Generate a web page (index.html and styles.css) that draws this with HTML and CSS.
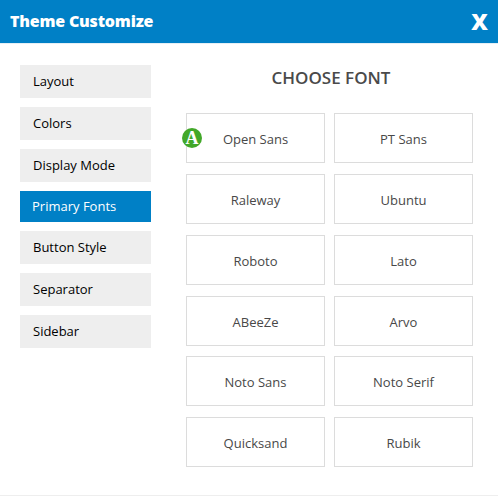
FILE: index.html
```html
<!DOCTYPE html>
<html lang="en">
<head>
<meta charset="utf-8">
<title>Theme Customize</title>
<link rel="stylesheet" href="styles.css">
</head>
<body>
<div class="dialog">
  <header class="header">
    <h1 class="title">Theme Customize</h1>
    <span class="close">X</span>
  </header>
  <main class="content">
    <nav class="menu">
      <a class="item">Layout</a>
      <a class="item">Colors</a>
      <a class="item">Display Mode</a>
      <a class="item active">Primary Fonts</a>
      <a class="item">Button Style</a>
      <a class="item">Separator</a>
      <a class="item">Sidebar</a>
    </nav>
    <section class="panel">
      <h2 class="heading">CHOOSE FONT</h2>
      <div class="fonts">
        <div class="font">Open Sans<span class="badge">A</span></div>
        <div class="font">PT Sans</div>
        <div class="font">Raleway</div>
        <div class="font">Ubuntu</div>
        <div class="font">Roboto</div>
        <div class="font">Lato</div>
        <div class="font">ABeeZe</div>
        <div class="font">Arvo</div>
        <div class="font">Noto Sans</div>
        <div class="font">Noto Serif</div>
        <div class="font">Quicksand</div>
        <div class="font">Rubik</div>
      </div>
    </section>
  </main>
</div>
</body>
</html>
```
FILE: styles.css
```css
* { box-sizing: border-box; }
body {
  margin: 0;
  background: #fff;
  font-family: "Open Sans", sans-serif;
  font-size: 13px;
}
.dialog {
  display: flex;
  flex-direction: column;
  height: 496px;
  border-bottom: 1px solid #eee;
}
.header {
  display: flex;
  justify-content: space-between;
  align-items: center;
  height: 44px;
  padding: 0 10px 2px;
  background: #0080c6;
  border-bottom: 1px solid #e5eff5;
  color: #fff;
}
.title {
  margin: 0;
  font-size: 16px;
  line-height: 22px;
  font-weight: 800;
  letter-spacing: -0.2px;
}
.close {
  font-size: 23px;
  line-height: 30px;
  font-weight: 800;
}
.content {
  display: flex;
  gap: 35px;
  padding: 21px 25px 0 20px;
}
.menu {
  display: flex;
  flex-direction: column;
  gap: 9px;
  width: 131px;
}
.item {
  height: 33px;
  padding-left: 13px;
  background: #eee;
  color: #000;
  line-height: 33px;
}
.item.active {
  height: 31px;
  padding-left: 12px;
  background: #0080c6;
  color: #fff;
  line-height: 31px;
}
.panel { width: 287px; }
.heading {
  margin: 0 0 22px;
  padding-left: 3px;
  color: #4a4a4a;
  font-size: 17px;
  font-weight: 600;
  line-height: 26px;
  text-align: center;
}
.fonts {
  display: grid;
  grid-template-columns: 139px 139px;
  gap: 10.86px 9px;
}
.font {
  position: relative;
  height: 50px;
  border: 1px solid #dcdcdc;
  color: #484848;
  line-height: 51px;
  text-align: center;
}
.badge {
  position: absolute;
  top: 14px;
  left: -5px;
  width: 20px;
  height: 20px;
  border-radius: 50%;
  background: #42a829;
  color: #fff;
  font: bold 18px/20px "Liberation Serif", serif;
}
```
